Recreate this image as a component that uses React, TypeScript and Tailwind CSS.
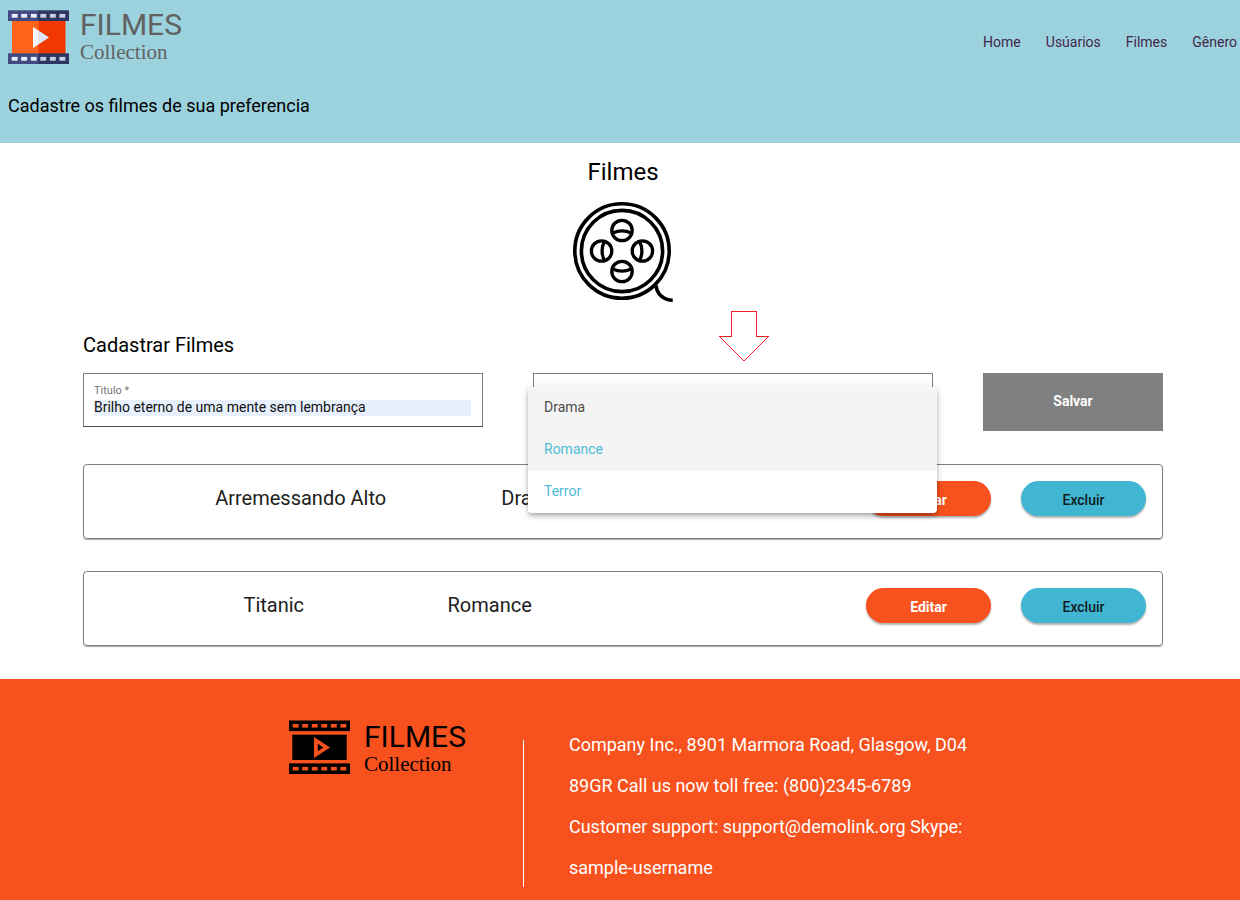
import React from "react";

const HOLES = [3.7, 13.2, 22.8, 32.3, 41.9, 51.4];

function ColorFilmIcon() {
  return (
    <svg width="61" height="54" viewBox="0 0 61 54" aria-hidden="true">
      <rect x="4" y="10" width="27" height="34" fill="#ff641a" />
      <rect x="30.5" y="10" width="27" height="34" fill="#f03800" />
      {[0.3, 43.3].map((y) => (
        <g key={y}>
          <rect x="0" y={y} width="31" height="10.7" fill="#414b82" />
          <rect x="30.5" y={y} width="30.5" height="10.7" fill="#2d3561" />
          {HOLES.map((x, i) => (
            <rect key={x} x={x} y={y + 3.6} width="5.9" height="3.8" fill={i < 3 ? "#e6eeff" : "#c9cfe4"} />
          ))}
        </g>
      ))}
      <path d="M25 17v21l5.8-3.8V20.8z" fill="#f5f8ff" />
      <path d="M30.5 20.6v13.8L41 27.5z" fill="#dce4f7" />
    </svg>
  );
}

function DarkFilmIcon() {
  return (
    <svg width="61" height="54" viewBox="0 0 61 54" aria-hidden="true">
      {[0.5, 43.4].map((y) => (
        <g key={y}>
          <rect x="0" y={y} width="61" height="10.6" fill="#000" />
          {HOLES.map((x) => (
            <rect key={x} x={x} y={y + 3.5} width="5.9" height="3.6" fill="#f7511d" />
          ))}
        </g>
      ))}
      <rect x="3.3" y="14.7" width="54.4" height="25.3" fill="#000" />
      <path d="M25 17v21l16-10.5zM28.8 23.7l5.6 3.8-5.6 3.8z" fill="#f7511d" fillRule="evenodd" />
    </svg>
  );
}

function ReelIcon() {
  return (
    <svg width="100" height="100" viewBox="0 0 100 100" fill="none" stroke="#000" strokeWidth="3.6" aria-hidden="true">
      <circle cx="49" cy="49" r="47.2" />
      <circle cx="49" cy="49" r="40.6" />
      <g strokeWidth="3.3">
        <circle cx="49" cy="28.5" r="10.2" />
        <circle cx="28.6" cy="49" r="10.2" />
        <circle cx="69.4" cy="49" r="10.2" />
        <circle cx="49" cy="69.5" r="10.2" />
        <path d="M39.8 31Q49 26.8 58.2 31" />
        <path d="M39.8 67Q49 71.2 58.2 67" />
        <path d="M31.2 39.8Q27 49 31.2 58.2" />
        <path d="M66.8 39.8Q71 49 66.8 58.2" />
      </g>
      <path d="M83.2 83.5C83.4 91.5 90.5 98.2 99.7 98.2" />
    </svg>
  );
}

function Brand({ dark = false }: { dark?: boolean }) {
  return (
    <a href="#" className={dark ? "flex gap-3.5 text-black" : "flex gap-[11px] text-[#616161]"}>
      {dark ? <DarkFilmIcon /> : <ColorFilmIcon />}
      <span className={dark ? "flex flex-col pt-0.5" : "flex flex-col"}>
        <span className="text-[30px] leading-[30px]">FILMES</span>
        <span className="font-['Liberation_Serif',serif] text-[21px] leading-6">Collection</span>
      </span>
    </a>
  );
}

const NAV = ["Home", "Usúarios", "Filmes", "Gênero"];
const MOVIES = [
  { title: "Arremessando Alto", genre: "Drama" },
  { title: "Titanic", genre: "Romance" },
];
const GENRES = ["Drama", "Romance", "Terror"];
const OPTION_STYLES = ["bg-[#f4f4f4] text-[#4a4a4a]", "bg-[#f4f4f4] text-[#4fbcd6]", "bg-white text-[#4fbcd6]"];

function MovieRow({ title, genre }: { title: string; genre: string }) {
  return (
    <li className="flex items-start justify-between rounded border border-[#808080] p-4 shadow-[0_1px_1px_rgba(0,0,0,0.35)]">
      <div className="flex w-[55%] justify-evenly text-xl leading-[34px] text-[#212121]">
        <span>{title}</span>
        <span>{genre}</span>
      </div>
      <div className="flex gap-[30px] pb-1.5 text-sm">
        <button type="button" className="h-[35px] w-[125px] rounded-full bg-[#f7511d] pt-0.5 font-bold text-white shadow-[0_2px_2px_rgba(0,0,0,0.3)]">
          Editar
        </button>
        <button type="button" className="h-[35px] w-[125px] rounded-full bg-[#40b6d2] pt-0.5 font-medium text-[#101c20] shadow-[0_2px_2px_rgba(0,0,0,0.3)]">
          Excluir
        </button>
      </div>
    </li>
  );
}

export default function App() {
  return (
    <div className="flex min-h-screen flex-col bg-white font-[Roboto,sans-serif] text-black">
      <header className="bg-[#9cd2dd] pt-2.5 pr-[3px] pb-[23px] pl-2">
        <div className="flex items-start justify-between">
          <Brand />
          <nav className="flex gap-[25px] pt-[22px] text-sm text-[#43274a]">
            {NAV.map((item) => (
              <a key={item} href="#">{item}</a>
            ))}
          </nav>
        </div>
        <p className="pt-7 text-lg leading-7">Cadastre os filmes de sua preferencia</p>
      </header>

      <main className="pt-[13px] pr-[77px] pb-[33px] pl-[83px]">
        <div className="flex flex-col items-center gap-3.5">
          <h1 className="text-2xl leading-8">Filmes</h1>
          <ReelIcon />
        </div>
        <h2 className="pt-[27px] text-xl leading-8">Cadastrar Filmes</h2>

        <form className="mt-3 grid grid-cols-[20fr_20fr_9fr] items-start gap-[50px] text-sm">
          <div className="flex h-[54px] flex-col border border-[#808080] border-b-[#4a4a4a] pt-2.5 pr-[11px] pl-2.5">
            <label htmlFor="titulo" className="pb-0.5 text-[11px] leading-[14px] text-[#757575]">Titulo *</label>
            <input
              id="titulo"
              type="text"
              defaultValue="Brilho eterno de uma mente sem lembrança"
              className="h-4 w-full bg-[#e8f0fe] pb-0.5 text-[#101010] outline-none"
            />
          </div>

          <div className="relative">
            <div className="flex h-[54px] flex-col border border-[#808080] pt-2.5 pr-[11px] pl-2.5">
              <label htmlFor="genero" className="text-[11px] leading-4 text-[#4fbcd6]">Gênero *</label>
              <select id="genero" className="h-4 w-full appearance-none outline-none" defaultValue="Romance">
                {GENRES.map((g) => (
                  <option key={g}>{g}</option>
                ))}
              </select>
            </div>
            <svg
              className="absolute -top-[63px] left-[186px]"
              width="52"
              height="52"
              viewBox="0 0 52 52"
              fill="none"
              stroke="#ed1c24"
              shapeRendering="crispEdges"
              aria-hidden="true"
            >
              <path d="M12.5 1.5h25v25h12L25 51 .5 26.5h12z" />
            </svg>
            <ul
              role="listbox"
              aria-label="Gênero"
              className="absolute top-3.5 -right-1 -left-[5px] z-10 overflow-hidden rounded shadow-[0_2px_4px_-1px_rgba(0,0,0,0.2),0_4px_5px_rgba(0,0,0,0.14),0_1px_10px_rgba(0,0,0,0.12)]"
            >
              {GENRES.map((g, i) => (
                <li key={g} role="option" aria-selected={g === "Romance"} className={`px-4 pb-0.5 leading-10 ${OPTION_STYLES[i]}`}>
                  {g}
                </li>
              ))}
            </ul>
          </div>

          <button type="submit" className="h-[58px] bg-[#808080] pb-0.5 font-bold text-white">Salvar</button>
        </form>

        <ul className="mt-[33px] flex flex-col gap-8">
          {MOVIES.map((m) => (
            <MovieRow key={m.title} title={m.title} genre={m.genre} />
          ))}
        </ul>
      </main>

      <footer className="flex grow items-start bg-[#f7511d] pt-[41px] pl-[289px]">
        <Brand dark />
        <div className="mt-5 ml-[57px] h-[147px] w-px bg-white" />
        <address className="mt-1 ml-[45px] max-w-[410px] text-lg leading-[41px] text-white not-italic">
          Company Inc., 8901 Marmora Road, Glasgow, D04 89GR Call us now toll free: (800)2345-6789 Customer support:
          support@demolink.org Skype: sample-username
        </address>
      </footer>
    </div>
  );
}
